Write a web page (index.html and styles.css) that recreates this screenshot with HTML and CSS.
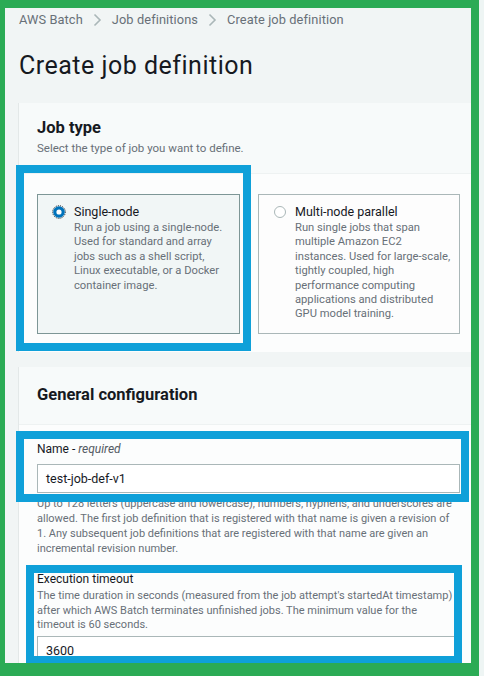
FILE: index.html
```html
<!DOCTYPE html>
<html lang="en">
<head>
<meta charset="utf-8">
<title>Create job definition</title>
<link rel="stylesheet" href="styles.css">
</head>
<body>
<div class="frame">
  <div class="screen">
    <nav class="crumbs">
      <span class="crumb">AWS Batch</span>
      <svg class="chev" width="9" height="14" viewBox="0 0 9 14"><polyline points="1.5,1.5 7,7 1.5,12.5" fill="none" stroke="#aab7b8" stroke-width="1.6"/></svg>
      <span class="crumb">Job definitions</span>
      <svg class="chev" width="9" height="14" viewBox="0 0 9 14"><polyline points="1.5,1.5 7,7 1.5,12.5" fill="none" stroke="#aab7b8" stroke-width="1.6"/></svg>
      <span class="crumb">Create job definition</span>
    </nav>
    <h1 class="title">Create job definition</h1>

    <section class="panel panel-type">
      <header class="panel-head">
        <h2>Job type</h2>
        <p class="sub">Select the type of job you want to define.</p>
      </header>
      <div class="panel-body cards">
        <div class="card selected">
          <svg class="radio" width="14" height="14" viewBox="0 0 14 14"><circle cx="7" cy="7" r="6.3" fill="none" stroke="#16191f" stroke-width="1" stroke-dasharray="1 1"/><circle cx="7" cy="7" r="4.2" fill="#fff" stroke="#0073bb" stroke-width="3.2"/></svg>
          <div class="card-text">
            <div class="card-title">Single-node</div>
            <div class="card-desc">Run a job using a single-node.<br>Used for standard and array<br>jobs such as a shell script,<br>Linux executable, or a Docker<br>container image.</div>
          </div>
        </div>
        <div class="card">
          <svg class="radio" width="14" height="14" viewBox="0 0 14 14"><circle cx="7" cy="7" r="5.5" fill="#fff" stroke="#aab7b8" stroke-width="1"/></svg>
          <div class="card-text">
            <div class="card-title">Multi-node parallel</div>
            <div class="card-desc">Run single jobs that span<br>multiple Amazon EC2<br>instances. Used for large-scale,<br>tightly coupled, high<br>performance computing<br>applications and distributed<br>GPU model training.</div>
          </div>
        </div>
      </div>
    </section>

    <section class="panel panel-general">
      <header class="panel-head general-head">
        <h2>General configuration</h2>
      </header>
      <div class="panel-body fields">
        <div class="field">
          <div class="label">Name - <i>required</i></div>
          <div class="input">test-job-def-v1</div>
          <p class="help">Up to 128 letters (uppercase and lowercase), numbers, hyphens, and underscores are<br>allowed. The first job definition that is registered with that name is given a revision of<br>1. Any subsequent job definitions that are registered with that name are given an<br>incremental revision number.</p>
        </div>
        <div class="field field-timeout">
          <div class="label">Execution timeout</div>
          <p class="desc">The time duration in seconds (measured from the job attempt's startedAt timestamp)<br>after which AWS Batch terminates unfinished jobs. The minimum value for the<br>timeout is 60 seconds.</p>
          <div class="input">3600</div>
        </div>
      </div>
    </section>

    <div class="hl hl-type"></div>
    <div class="hl hl-name"></div>
    <div class="hl hl-timeout"></div>
  </div>
</div>
</body>
</html>
```

FILE: styles.css
```css
* { box-sizing: border-box; }
html, body { margin: 0; padding: 0; }
body {
  background: #eef5f4;
  font-family: Roboto, "Liberation Sans", sans-serif;
  color: #16191f;
  width: 484px;
  height: 676px;
  overflow: hidden;
}
.frame {
  width: 479px;
  height: 676px;
  border-style: solid;
  border-color: #2bab55;
  border-width: 8px 8px 13px 5px;
}
.screen {
  position: relative;
  width: 466px;
  height: 655px;
  overflow: hidden;
  background: #f1f5f5;
}
.crumbs {
  display: flex;
  align-items: center;
  gap: 10px;
  padding: 4px 0 0 14px;
  height: 20px;
  font-size: 12.8px;
  line-height: 16px;
  letter-spacing: 0.1px;
  color: #687078;
}
.chev { display: block; }
.title {
  margin: 22px 0 0 14px;
  font-size: 25px;
  line-height: 32px;
  font-weight: 400;
  letter-spacing: 0.5px;
  color: #16191f;
}
.panel {
  margin-left: 13px;
  background: #fcfdfd;
  border-left: 1px solid #e3e8e8;
}
.panel-type { margin-top: 21px; }
.panel-head {
  background: #f7fafa;
  padding: 15px 19px 17px 18px;
  border-bottom: 1px solid #eef2f2;
}
.panel-head h2 {
  margin: 0;
  font-size: 16.5px;
  line-height: 20px;
  font-weight: 700;
  color: #16191f;
}
.sub {
  margin: 2px 0 0;
  font-size: 11.5px;
  line-height: 16px;
  color: #687078;
}
.cards {
  display: grid;
  grid-template-columns: 203px 202px;
  gap: 18px;
  padding: 20px 11px 18px 18px;
}
.card {
  display: flex;
  align-items: flex-start;
  gap: 8px;
  height: 140px;
  padding: 8px 10px 0 14px;
  border: 1px solid #aab7b8;
  background: #fdfdfd;
}
.card.selected {
  background: #f1f6f6;
  border-color: #7d9696;
}
.radio { flex: none; margin-top: 2px; }
.card-title {
  font-size: 12.5px;
  line-height: 17px;
  color: #16191f;
}
.card-desc {
  margin-top: 1px;
  font-size: 11.2px;
  line-height: 14.4px;
  color: #687078;
  white-space: nowrap;
}
.panel-general { margin-top: 15px; height: 320px; }
.general-head { padding: 18px 19px 19px 18px; }
.fields { padding: 16px 11px 0 18px; }
.label {
  font-size: 12px;
  line-height: 16px;
  color: #16191f;
}
.label i { font-style: italic; color: #545b64; }
.input {
  margin-top: 7px;
  height: 29px;
  padding: 0 8px;
  border: 1px solid #aab7b8;
  background: #fff;
  font-size: 12.5px;
  line-height: 27px;
  color: #16191f;
}
.help {
  margin: 3px 0 0;
  font-size: 11px;
  line-height: 15px;
  color: #687078;
  white-space: nowrap;
}
.field-timeout { margin-top: 15px; }
.desc {
  margin: 2px 0 0;
  font-size: 11px;
  line-height: 14.5px;
  color: #687078;
  white-space: nowrap;
}
.field-timeout .input { margin-top: 3px; }
.hl {
  position: absolute;
  border: 8px solid #0fa0d9;
  pointer-events: none;
}
.hl-type { left: 11px; top: 157px; width: 235px; height: 186px; }
.hl-name { left: 11px; top: 423px; width: 453px; height: 71px; }
.hl-timeout { left: 21px; top: 557px; width: 436px; height: 99px; }
```
